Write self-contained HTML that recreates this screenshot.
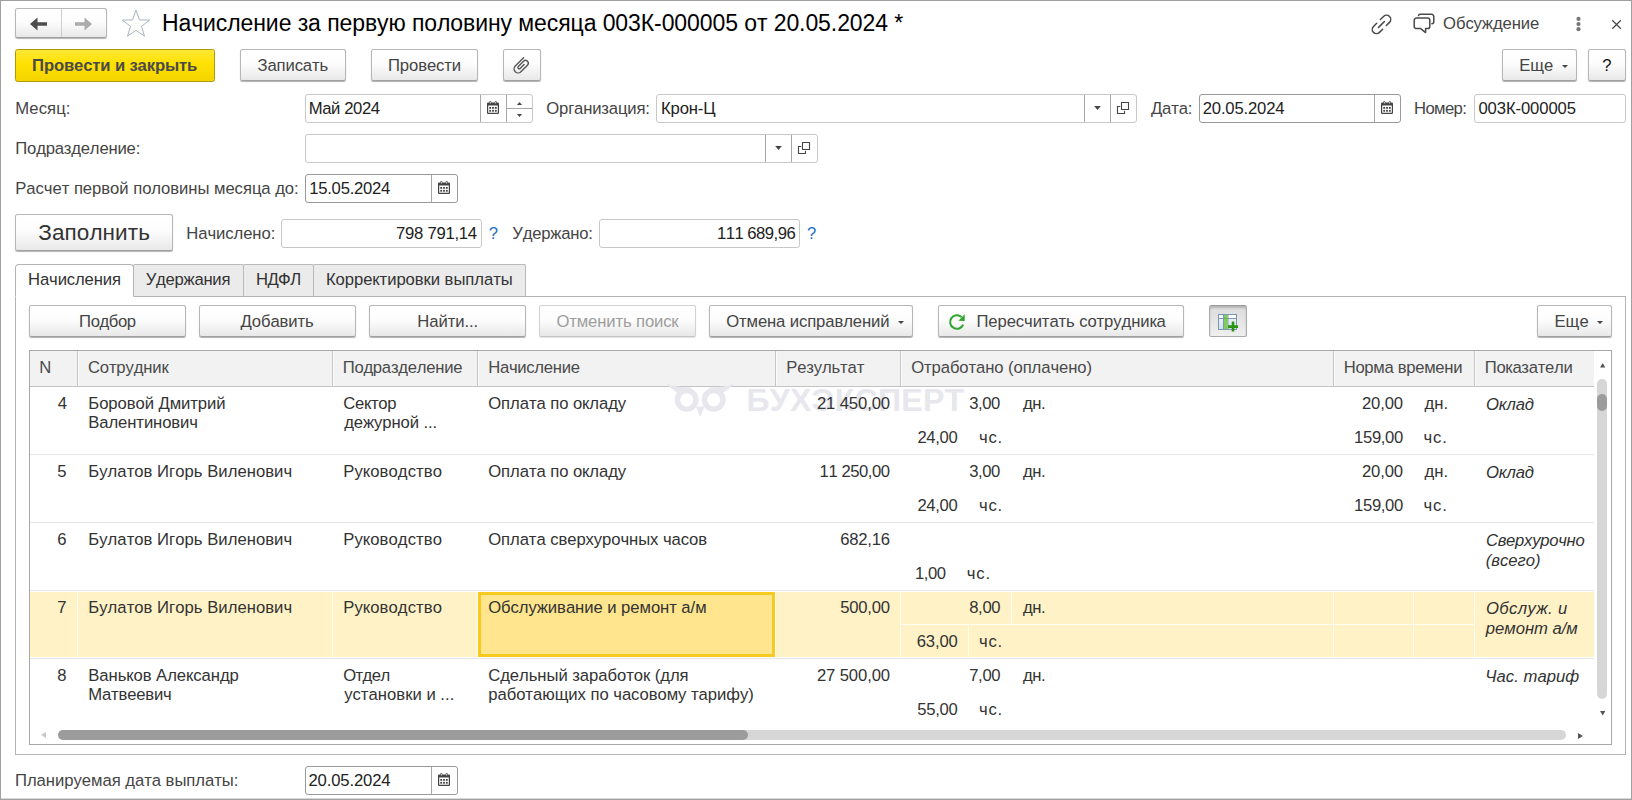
<!DOCTYPE html>
<html lang="ru">
<head>
<meta charset="utf-8">
<title>Начисление за первую половину месяца</title>
<style>
*{box-sizing:border-box;margin:0;padding:0}
html,body{width:1632px;height:800px;overflow:hidden;background:#fff}
body{position:relative;font-family:"Liberation Sans",Arial,sans-serif;font-size:16.67px;color:#333;font-kerning:none}
.frame{position:absolute;left:0;top:0;width:1632px;height:800px;border:1px solid #a0a0a0;box-shadow:inset 0 -1px 0 rgba(150,150,150,.35);z-index:50}
.a{position:absolute}
.t{position:absolute;white-space:nowrap;line-height:20px}
.btn{position:absolute;height:32px;top:49px;border:1px solid #b7b7b7;border-bottom-color:#a0a0a0;border-radius:2.5px;background:linear-gradient(#fff 0%,#fdfdfd 45%,#e8e8e8 100%);box-shadow:0 1px 1px rgba(0,0,0,.3)}
.btn.y{height:33px;background:linear-gradient(#ffe736 0%,#ffe100 45%,#f4d400 100%);border-color:#ad9a08;box-shadow:none}
.btn.dis{border-color:#d2d2d2;border-bottom-color:#c4c4c4;box-shadow:0 1px 1px rgba(0,0,0,.12)}
.btn.tb{top:305px}
.btn.on{background:linear-gradient(#dcdcdc,#efefef);border-color:#aaa;border-top-color:#9a9a9a;box-shadow:inset 0 2px 2px rgba(0,0,0,.18)}
.fld{position:absolute;height:29px;border:1px solid #c8c8c8;border-radius:3px;background:#fff}
.fld.dk{border-color:#9a9a9a}
.dv{position:absolute;top:0;bottom:0;width:1px;background:#a6a6a6}
.tab{position:absolute;top:264px;height:33px;border:1px solid #b9b9b9;border-bottom-color:#b4b4b4;background:#ebebeb;border-radius:2px 2px 0 0}
.tab.act{background:#fff;border-radius:4px 4px 0 0;border-color:#b4b4b4 #b4b4b4 #fff #b4b4b4}
svg{position:absolute;overflow:visible}
.hdv{position:absolute;top:0;width:2px;height:35px;border-left:1px solid #c6c6c6;background:#fafafa}
</style>
</head>
<body>
<div class="frame"></div>
<div class="btn" style="left:15px;top:8px;width:92px;height:30px"></div>
<div class="a" style="left:61px;top:9px;width:1px;height:28px;background:#cdcdcd"></div>
<svg style="left:30px;top:16.6px" width="18" height="14" viewBox="0 0 18 14"><path d="M0 7 L7.5 0.4 V5.3 H17 V8.7 H7.5 V13.6 Z" fill="#4d4d4d"/></svg>
<svg style="left:74px;top:16.6px" width="18" height="14" viewBox="0 0 18 14"><path d="M18 7 L10.5 0.4 V5.3 H1 V8.7 H10.5 V13.6 Z" fill="#ababab"/></svg>
<svg style="left:120.5px;top:9px" width="30" height="28" viewBox="0 0 30 28"><path d="M15 1.2 L18.4 10.9 L28.7 11.1 L20.5 17.3 L23.5 27.2 L15 21.3 L6.5 27.2 L9.5 17.3 L1.3 11.1 L11.6 10.9 Z" fill="#fff" stroke="#aab4be" stroke-width="1"/></svg>
<svg style="left:0;top:0" width="1632" height="60"><g transform="translate(1381.5 24.4) rotate(-45)" fill="none" stroke="#4a4a4a" stroke-width="1.5" stroke-linecap="round"><path d="M2.6 -4.2 H7.1 A4.2 4.2 0 0 1 7.1 4.2 H2.6"/><path d="M-2.6 -4.2 H-7.1 A4.2 4.2 0 0 0 -7.1 4.2 H-2.6"/><path d="M-4.2 0 H4.2"/></g><g fill="none" stroke="#4a4a4a" stroke-width="1.5" stroke-linecap="round" stroke-linejoin="round"><path d="M1416.4 18.1 H1427.6 A2.2 2.2 0 0 1 1429.8 20.3 V26.4 A2.2 2.2 0 0 1 1427.6 28.6 H1425.6 V32.6 L1420.7 28.6 H1416.4 A2.2 2.2 0 0 1 1414.2 26.4 V20.3 A2.2 2.2 0 0 1 1416.4 18.1 Z"/><path d="M1418.5 15.6 A1.6 1.6 0 0 1 1420 14.3 H1431.6 A2.2 2.2 0 0 1 1433.8 16.5 V21.8 A2 2 0 0 1 1431.9 23.8"/></g><g fill="#787878"><circle cx="1578.5" cy="18.9" r="2.1"/><circle cx="1578.5" cy="24.1" r="2.1"/><circle cx="1578.5" cy="29.2" r="2.1"/></g><path d="M1612.3 20.3 L1620.8 28.7 M1620.8 20.3 L1612.3 28.7" stroke="#444" stroke-width="1.2" fill="none"/></svg>
<div class="btn y" style="left:15px;width:200px"><div class="t" style="left:16.10px;top:6px;font-weight:bold;letter-spacing:-0.147px;color:#4a4a4a">Провести и закрыть</div></div>
<div class="btn" style="left:240px;width:106px"><div class="t" style="left:16.50px;top:6px;letter-spacing:-0.129px;color:#444">Записать</div></div>
<div class="btn" style="left:371px;width:107px"><div class="t" style="left:16px;top:6px;letter-spacing:-0.114px;color:#444">Провести</div></div>
<div class="btn" style="left:503px;width:38px"></div>
<svg style="left:0;top:0" width="600" height="90"><g transform="translate(518.1 68.9) rotate(-45)" fill="none" stroke="#555" stroke-width="1.4" stroke-linecap="round"><path d="M11.8 -4 H0 A4 4 0 0 0 0 4 H9.2 A2.75 2.75 0 0 0 9.2 -1.5 H1.8 A1.3 1.3 0 0 0 1.8 1.1 H7.4"/></g></svg>
<div class="btn" style="left:1502px;width:75px"><div class="t" style="left:16.20px;top:6px;color:#444">Еще</div></div>
<svg style="left:1562px;top:65px" width="6" height="3" viewBox="0 0 6 3"><path d="M0 0 H6 L3 3 Z" fill="#444"/></svg>
<div class="btn" style="left:1588px;width:38px"><div class="t" style="left:13.35px;top:6px;color:#111">?</div></div>
<div class="fld" style="left:305px;top:94px;width:228px"><span class="dv" style="left:174px"></span><span class="dv" style="left:200px"></span><div class="t" style="left:2.70px;top:4.0px;letter-spacing:-0.4px;color:#222">Май 2024</div></div>
<div class="a" style="left:507px;top:108px;width:25px;height:1px;background:#a6a6a6"></div>
<svg style="left:487px;top:101px" width="12" height="13" viewBox="0 0 12 13"><path fill="#444" fill-rule="evenodd" d="M1.2 1.5 H2.3 V0.9 A1 1 0 0 1 4.3 0.9 V1.5 H7.7 V0.9 A1 1 0 0 1 9.7 0.9 V1.5 H10.8 A1.2 1.2 0 0 1 12 2.7 V11.8 A1.2 1.2 0 0 1 10.8 13 H1.2 A1.2 1.2 0 0 1 0 11.8 V2.7 A1.2 1.2 0 0 1 1.2 1.5 Z M1.2 4.6 V11.8 H10.8 V4.6 Z M2.9 0.9 V2.6 H3.7 V0.9 A.4 .4 0 0 0 2.9 .9 Z M8.3 0.9 V2.6 H9.1 V0.9 A.4 .4 0 0 0 8.3 .9 Z"/><g fill="#444"><rect x="2.3" y="6" width="1.8" height="1.8"/><rect x="5.1" y="6" width="1.8" height="1.8"/><rect x="7.9" y="6" width="1.8" height="1.8"/><rect x="2.3" y="8.9" width="1.8" height="1.8"/><rect x="5.1" y="8.9" width="1.8" height="1.8"/><rect x="7.9" y="8.9" width="1.8" height="1.8"/></g></svg>
<svg style="left:516.5px;top:101.5px" width="5" height="3" viewBox="0 0 5 3"><path d="M0 3 H5 L2.5 0 Z" fill="#444"/></svg>
<svg style="left:516.5px;top:113.5px" width="5" height="3" viewBox="0 0 5 3"><path d="M0 0 H5 L2.5 3 Z" fill="#444"/></svg>
<div class="fld" style="left:656px;top:94px;width:481px"><span class="dv" style="left:427px"></span><span class="dv" style="left:453px"></span><div class="t" style="left:4px;top:4.0px;letter-spacing:-0.14px;color:#222">Крон-Ц</div></div>
<svg style="left:1094px;top:106px" width="7" height="4" viewBox="0 0 7 4"><path d="M0.2 0 H6.8 L3.5 4 Z" fill="#444"/></svg>
<svg style="left:1117px;top:102px" width="12" height="12" viewBox="0 0 12 12"><path d="M4.5 0.5 H11.5 V7.5 H4.5 Z M3.3 4.5 H0.5 V11.5 H7.5 V8.7" fill="none" stroke="#444" stroke-width="1.1"/></svg>
<div class="fld dk" style="left:1199px;top:94px;width:202px"><span class="dv" style="left:174px"></span><div class="t" style="left:2.70px;top:4.0px;letter-spacing:-0.167px;color:#222">20.05.2024</div></div>
<svg style="left:1381px;top:101px" width="12" height="13" viewBox="0 0 12 13"><path fill="#444" fill-rule="evenodd" d="M1.2 1.5 H2.3 V0.9 A1 1 0 0 1 4.3 0.9 V1.5 H7.7 V0.9 A1 1 0 0 1 9.7 0.9 V1.5 H10.8 A1.2 1.2 0 0 1 12 2.7 V11.8 A1.2 1.2 0 0 1 10.8 13 H1.2 A1.2 1.2 0 0 1 0 11.8 V2.7 A1.2 1.2 0 0 1 1.2 1.5 Z M1.2 4.6 V11.8 H10.8 V4.6 Z M2.9 0.9 V2.6 H3.7 V0.9 A.4 .4 0 0 0 2.9 .9 Z M8.3 0.9 V2.6 H9.1 V0.9 A.4 .4 0 0 0 8.3 .9 Z"/><g fill="#444"><rect x="2.3" y="6" width="1.8" height="1.8"/><rect x="5.1" y="6" width="1.8" height="1.8"/><rect x="7.9" y="6" width="1.8" height="1.8"/><rect x="2.3" y="8.9" width="1.8" height="1.8"/><rect x="5.1" y="8.9" width="1.8" height="1.8"/><rect x="7.9" y="8.9" width="1.8" height="1.8"/></g></svg>
<div class="fld" style="left:1474px;top:94px;width:152px"><div class="t" style="left:3.40px;top:4.0px;letter-spacing:-0.1px;color:#222">003К-000005</div></div>
<div class="fld" style="left:305px;top:134px;width:513px"><span class="dv" style="left:459px"></span><span class="dv" style="left:485px"></span></div>
<svg style="left:775px;top:146px" width="7" height="4" viewBox="0 0 7 4"><path d="M0.2 0 H6.8 L3.5 4 Z" fill="#444"/></svg>
<svg style="left:798px;top:142px" width="12" height="12" viewBox="0 0 12 12"><path d="M4.5 0.5 H11.5 V7.5 H4.5 Z M3.3 4.5 H0.5 V11.5 H7.5 V8.7" fill="none" stroke="#444" stroke-width="1.1"/></svg>
<div class="fld dk" style="left:305px;top:174px;width:153px"><span class="dv" style="left:125px"></span><div class="t" style="left:3.20px;top:4.0px;letter-spacing:-0.244px;color:#222">15.05.2024</div></div>
<svg style="left:438px;top:181px" width="12" height="13" viewBox="0 0 12 13"><path fill="#444" fill-rule="evenodd" d="M1.2 1.5 H2.3 V0.9 A1 1 0 0 1 4.3 0.9 V1.5 H7.7 V0.9 A1 1 0 0 1 9.7 0.9 V1.5 H10.8 A1.2 1.2 0 0 1 12 2.7 V11.8 A1.2 1.2 0 0 1 10.8 13 H1.2 A1.2 1.2 0 0 1 0 11.8 V2.7 A1.2 1.2 0 0 1 1.2 1.5 Z M1.2 4.6 V11.8 H10.8 V4.6 Z M2.9 0.9 V2.6 H3.7 V0.9 A.4 .4 0 0 0 2.9 .9 Z M8.3 0.9 V2.6 H9.1 V0.9 A.4 .4 0 0 0 8.3 .9 Z"/><g fill="#444"><rect x="2.3" y="6" width="1.8" height="1.8"/><rect x="5.1" y="6" width="1.8" height="1.8"/><rect x="7.9" y="6" width="1.8" height="1.8"/><rect x="2.3" y="8.9" width="1.8" height="1.8"/><rect x="5.1" y="8.9" width="1.8" height="1.8"/><rect x="7.9" y="8.9" width="1.8" height="1.8"/></g></svg>
<div class="btn" style="left:15px;top:214px;width:158px;height:37px"><div class="t" style="left:22.30px;top:4.0px;font-size:22.5px;line-height:28px;letter-spacing:0.075px;color:#333">Заполнить</div></div>
<div class="fld" style="left:281px;top:219px;width:201px"><div class="t" style="left:114px;top:4.0px;letter-spacing:-0.256px;color:#222">798 791,14</div></div>
<div class="fld" style="left:599px;top:219px;width:201px"><div class="t" style="left:116.90px;top:4.0px;letter-spacing:-0.511px;color:#222">111 689,96</div></div>
<div class="a" style="left:15px;top:296px;width:1611px;height:459px;border:1px solid #b4b4b4;background:#fff"></div>
<div class="tab" style="left:133px;width:111px"><div class="t" style="left:11.70px;top:5px;letter-spacing:-0.25px;color:#333">Удержания</div></div>
<div class="tab" style="left:243px;width:71px"><div class="t" style="left:12px;top:5px;letter-spacing:-0.6px;color:#333">НДФЛ</div></div>
<div class="tab" style="left:313px;width:213px"><div class="t" style="left:11.90px;top:5px;letter-spacing:-0.06px;color:#333">Корректировки выплаты</div></div>
<div class="tab act" style="left:15px;width:119px"><div class="t" style="left:12.10px;top:5px;letter-spacing:-0.133px;color:#333">Начисления</div></div>
<div class="btn tb" style="left:29px;width:157px"><div class="t" style="left:49.10px;top:6px;letter-spacing:-0.4px;color:#444">Подбор</div></div>
<div class="btn tb" style="left:199px;width:157px"><div class="t" style="left:40.60px;top:6px;letter-spacing:-0.086px;color:#444">Добавить</div></div>
<div class="btn tb" style="left:369px;width:157px"><div class="t" style="left:47.30px;top:6px;letter-spacing:-0.071px;color:#444">Найти...</div></div>
<div class="btn tb dis" style="left:539px;width:157px"><div class="t" style="left:16.50px;top:6px;letter-spacing:-0.138px;color:#9d9d9d">Отменить поиск</div></div>
<div class="btn tb" style="left:709px;width:204px"><div class="t" style="left:16.20px;top:6px;letter-spacing:-0.112px;color:#444">Отмена исправлений</div></div>
<div class="btn tb" style="left:938px;width:246px"><div class="t" style="left:37.50px;top:6px;letter-spacing:-0.1px;color:#444">Пересчитать сотрудника</div></div>
<div class="btn tb on" style="left:1209px;width:38px"></div>
<div class="btn tb" style="left:1537px;width:75px"><div class="t" style="left:16.40px;top:6px;letter-spacing:0.1px;color:#444">Еще</div></div>
<svg style="left:898px;top:321px" width="6" height="3" viewBox="0 0 6 3"><path d="M0 0 H6 L3 3 Z" fill="#444"/></svg>
<svg style="left:1597px;top:321px" width="6" height="3" viewBox="0 0 6 3"><path d="M0 0 H6 L3 3 Z" fill="#444"/></svg>
<svg style="left:0;top:300px" width="1000" height="40"><g transform="translate(956.9 22)"><path d="M6.3 2.6 A6.8 6.8 0 1 1 4.6 -5" fill="none" stroke="#2fa52f" stroke-width="2"/><path d="M7.8 -7.8 V-1 L1.5 -1.3 Z" fill="#2fa52f"/></g></svg>
<svg style="left:1218px;top:314px" width="20" height="20" viewBox="0 0 20 20"><defs><linearGradient id="cg" x1="0" y1="0" x2="0" y2="1"><stop offset="0" stop-color="#f4f8fb"/><stop offset="1" stop-color="#cfe0ee"/></linearGradient></defs><rect x="0.5" y="0.5" width="18" height="15" fill="url(#cg)" stroke="#7b98b0"/><rect x="1" y="1" width="17" height="3" fill="#fff"/><path d="M.5 4.5 H18.5 M5.5 .5 V15.5 M10 .5 V15.5" stroke="#7b98b0" fill="none"/><rect x="6" y="1" width="3.6" height="14" fill="#7fcb5c"/><path d="M6 4.5 H9.6" stroke="#6ab04a"/><path d="M15 7.6 V17.6 M10 12.6 H20" stroke="#2a9410" stroke-width="2.6"/></svg>
<div class="a" style="left:29px;top:350px;width:1583px;height:395px;border:1px solid #a8a8a8;background:#fff;overflow:hidden">
<div class="a" style="left:0;top:0;width:1564px;height:35px;background:#f2f2f2"></div>
<div class="a" style="left:0;top:35px;width:1564px;height:1px;background:#c4c4c4"></div>
<div class="hdv" style="left:47px"></div>
<div class="hdv" style="left:302px"></div>
<div class="hdv" style="left:447px"></div>
<div class="hdv" style="left:745px"></div>
<div class="hdv" style="left:870px"></div>
<div class="hdv" style="left:1303px"></div>
<div class="hdv" style="left:1444px"></div>
<div class="a" style="left:0;top:103px;width:1564px;height:1px;background:#e6e6e6"></div>
<div class="a" style="left:0;top:171px;width:1564px;height:1px;background:#e6e6e6"></div>
<div class="a" style="left:0;top:239px;width:1564px;height:1px;background:#e6e6e6"></div>
<div class="a" style="left:0;top:307px;width:1564px;height:1px;background:#e6e6e6"></div>
<div class="a" style="left:0;top:241px;width:1564px;height:65px;background:#fff2c6"></div>
<div class="a" style="left:47px;top:241px;width:1px;height:65px;background:#fffcf3"></div>
<div class="a" style="left:302px;top:241px;width:1px;height:65px;background:#fffcf3"></div>
<div class="a" style="left:447px;top:241px;width:1px;height:65px;background:#fffcf3"></div>
<div class="a" style="left:745px;top:241px;width:1px;height:65px;background:#fffcf3"></div>
<div class="a" style="left:870px;top:241px;width:1px;height:65px;background:#fffcf3"></div>
<div class="a" style="left:1303px;top:241px;width:1px;height:65px;background:#fffcf3"></div>
<div class="a" style="left:1383px;top:241px;width:1px;height:65px;background:#fffcf3"></div>
<div class="a" style="left:1444px;top:241px;width:1px;height:65px;background:#fffcf3"></div>
<div class="a" style="left:981px;top:241px;width:1px;height:32px;background:#fffcf3"></div>
<div class="a" style="left:938px;top:273px;width:1px;height:33px;background:#fffcf3"></div>
<div class="a" style="left:871px;top:273px;width:573px;height:1px;background:#fffcf3"></div>
<div class="a" style="left:448px;top:241px;width:297px;height:65px;background:#fee58e;border:3px solid #f8c91f"></div>
<svg style="left:0;top:0" width="1564" height="80"><g transform="translate(-30 -351)" fill="none" stroke="#e7e7ed"><circle cx="686.7" cy="399.8" r="9.3" stroke-width="5.4"/><circle cx="713.7" cy="399.8" r="9.3" stroke-width="5.4"/><path d="M666.2 383.2 Q676 387.6 691 387.6 L693 391.5 Q680 394.5 675.5 391.6 Q670 388 666.2 383.2 Z" fill="#e7e7ed" stroke="none"/><path d="M734.2 383.2 Q724.4 387.6 709.4 387.6 L707.4 391.5 Q720.4 394.5 724.9 391.6 Q730.4 388 734.2 383.2 Z" fill="#e7e7ed" stroke="none"/><path d="M696.6 407 L700.2 416 L703.8 407 Z" fill="#e7e7ed" stroke-width="1"/></g></svg>
<div class="t" style="left:716.40px;top:31px;font-size:32px;line-height:36px;font-weight:bold;letter-spacing:0.311px;color:#e7e7ed">БУХЭКСПЕРТ</div>
<div class="t" style="left:9.15px;top:7px;color:#4a4a4a">N</div>
<div class="t" style="left:57.90px;top:7px;letter-spacing:-0.15px;color:#4a4a4a">Сотрудник</div>
<div class="t" style="left:312.70px;top:7px;letter-spacing:-0.258px;color:#4a4a4a">Подразделение</div>
<div class="t" style="left:458.20px;top:7px;letter-spacing:-0.289px;color:#4a4a4a">Начисление</div>
<div class="t" style="left:756.20px;top:7px;letter-spacing:-0.137px;color:#4a4a4a">Результат</div>
<div class="t" style="left:881.20px;top:7px;letter-spacing:-0.095px;color:#4a4a4a">Отработано (оплачено)</div>
<div class="t" style="left:1313.70px;top:7px;letter-spacing:-0.308px;color:#4a4a4a">Норма времени</div>
<div class="t" style="left:1454.70px;top:7px;letter-spacing:-0.278px;color:#4a4a4a">Показатели</div>
<div class="t" style="left:27.85px;top:43px;color:#333">4</div>
<div class="t" style="left:58.30px;top:43px;letter-spacing:-0.079px;color:#333">Боровой Дмитрий</div>
<div class="t" style="left:58.30px;top:62px;letter-spacing:-0.1px;color:#333">Валентинович</div>
<div class="t" style="left:313.20px;top:43px;letter-spacing:-0.28px;color:#333">Сектор</div>
<div class="t" style="left:314.20px;top:62px;letter-spacing:-0.091px;color:#333">дежурной ...</div>
<div class="t" style="left:458.20px;top:43px;letter-spacing:-0.067px;color:#333">Оплата по окладу</div>
<div class="t" style="left:786.90px;top:43px;letter-spacing:-0.113px;color:#333">21 450,00</div>
<div class="t" style="left:939.20px;top:43px;letter-spacing:-0.433px;color:#333">3,00</div>
<div class="t" style="left:992.90px;top:43px;letter-spacing:-0.4px;color:#333">дн.</div>
<div class="t" style="left:887.40px;top:77px;letter-spacing:-0.35px;color:#333">24,00</div>
<div class="t" style="left:949px;top:77px;letter-spacing:0.8px;color:#333">чс.</div>
<div class="t" style="left:1332px;top:43px;letter-spacing:-0.175px;color:#333">20,00</div>
<div class="t" style="left:1394.60px;top:43px;letter-spacing:-0.05px;color:#333">дн.</div>
<div class="t" style="left:1324.10px;top:77px;letter-spacing:-0.36px;color:#333">159,00</div>
<div class="t" style="left:1393.60px;top:77px;letter-spacing:0.8px;color:#333">чс.</div>
<div class="t" style="left:1455.90px;top:44px;font-style:italic;letter-spacing:-0.125px;color:#333">Оклад</div>
<div class="t" style="left:27.35px;top:111px;color:#333">5</div>
<div class="t" style="left:58.30px;top:111px;letter-spacing:0.027px;color:#333">Булатов Игорь Виленович</div>
<div class="t" style="left:313.20px;top:111px;letter-spacing:0.09px;color:#333">Руководство</div>
<div class="t" style="left:458.20px;top:111px;letter-spacing:-0.067px;color:#333">Оплата по окладу</div>
<div class="t" style="left:789.60px;top:111px;letter-spacing:-0.45px;color:#333">11 250,00</div>
<div class="t" style="left:939.20px;top:111px;letter-spacing:-0.433px;color:#333">3,00</div>
<div class="t" style="left:992.90px;top:111px;letter-spacing:-0.4px;color:#333">дн.</div>
<div class="t" style="left:887.40px;top:145px;letter-spacing:-0.35px;color:#333">24,00</div>
<div class="t" style="left:949px;top:145px;letter-spacing:0.8px;color:#333">чс.</div>
<div class="t" style="left:1332px;top:111px;letter-spacing:-0.175px;color:#333">20,00</div>
<div class="t" style="left:1394.60px;top:111px;letter-spacing:-0.05px;color:#333">дн.</div>
<div class="t" style="left:1324.10px;top:145px;letter-spacing:-0.36px;color:#333">159,00</div>
<div class="t" style="left:1393.60px;top:145px;letter-spacing:0.8px;color:#333">чс.</div>
<div class="t" style="left:1455.90px;top:112px;font-style:italic;letter-spacing:-0.125px;color:#333">Оклад</div>
<div class="t" style="left:27.35px;top:179px;color:#333">6</div>
<div class="t" style="left:58.30px;top:179px;letter-spacing:0.027px;color:#333">Булатов Игорь Виленович</div>
<div class="t" style="left:313.20px;top:179px;letter-spacing:0.09px;color:#333">Руководство</div>
<div class="t" style="left:458.20px;top:179px;letter-spacing:-0.071px;color:#333">Оплата сверхурочных часов</div>
<div class="t" style="left:810.20px;top:179px;letter-spacing:-0.24px;color:#333">682,16</div>
<div class="t" style="left:885.10px;top:213px;letter-spacing:-0.5px;color:#333">1,00</div>
<div class="t" style="left:936.70px;top:213px;letter-spacing:0.9px;color:#333">чс.</div>
<div class="t" style="left:1455.90px;top:180px;font-style:italic;letter-spacing:-0.26px;color:#333">Сверхурочно</div>
<div class="t" style="left:1455.70px;top:200px;font-style:italic;color:#333">(всего)</div>
<div class="t" style="left:27.35px;top:247px;color:#333">7</div>
<div class="t" style="left:58.30px;top:247px;letter-spacing:0.027px;color:#333">Булатов Игорь Виленович</div>
<div class="t" style="left:313.20px;top:247px;letter-spacing:0.09px;color:#333">Руководство</div>
<div class="t" style="left:458.20px;top:247px;letter-spacing:-0.058px;color:#333">Обслуживание и ремонт а/м</div>
<div class="t" style="left:810.30px;top:247px;letter-spacing:-0.26px;color:#333">500,00</div>
<div class="t" style="left:939.20px;top:247px;letter-spacing:-0.333px;color:#333">8,00</div>
<div class="t" style="left:992.90px;top:247px;letter-spacing:-0.4px;color:#333">дн.</div>
<div class="t" style="left:886.70px;top:281px;letter-spacing:-0.125px;color:#333">63,00</div>
<div class="t" style="left:949px;top:281px;letter-spacing:0.8px;color:#333">чс.</div>
<div class="t" style="left:1455.90px;top:248px;font-style:italic;letter-spacing:0.375px;color:#333">Обслуж. и</div>
<div class="t" style="left:1455.80px;top:268px;font-style:italic;letter-spacing:-0.022px;color:#333">ремонт а/м</div>
<div class="t" style="left:27.35px;top:315px;color:#333">8</div>
<div class="t" style="left:58.30px;top:315px;letter-spacing:-0.056px;color:#333">Ваньков Александр</div>
<div class="t" style="left:58.30px;top:334px;letter-spacing:-0.188px;color:#333">Матвеевич</div>
<div class="t" style="left:313.20px;top:315px;letter-spacing:-0.575px;color:#333">Отдел</div>
<div class="t" style="left:314.20px;top:334px;letter-spacing:0.014px;color:#333">установки и ...</div>
<div class="t" style="left:458.20px;top:315px;letter-spacing:-0.05px;color:#333">Сдельный заработок (для</div>
<div class="t" style="left:458.20px;top:334px;letter-spacing:-0.038px;color:#333">работающих по часовому тарифу)</div>
<div class="t" style="left:786.90px;top:315px;letter-spacing:-0.113px;color:#333">27 500,00</div>
<div class="t" style="left:939.20px;top:315px;letter-spacing:-0.333px;color:#333">7,00</div>
<div class="t" style="left:992.90px;top:315px;letter-spacing:-0.4px;color:#333">дн.</div>
<div class="t" style="left:887.20px;top:349px;letter-spacing:-0.25px;color:#333">55,00</div>
<div class="t" style="left:949px;top:349px;letter-spacing:0.8px;color:#333">чс.</div>
<div class="t" style="left:1455.20px;top:316px;font-style:italic;letter-spacing:0.044px;color:#333">Час. тариф</div>
<div class="a" style="left:0;top:376px;width:1581px;height:17px;background:#fff"></div>
<div class="a" style="left:28px;top:379px;width:1508px;height:10px;border-radius:5px;background:#d6d6d6"></div>
<div class="a" style="left:28px;top:379px;width:690px;height:10px;border-radius:5px;background:#9c9c9c"></div>
<svg style="left:11px;top:381.20000000000005px" width="5" height="6" viewBox="0 0 5 6"><path d="M5 0 L0 3 L5 6Z" fill="#c8c8c8"/></svg>
<svg style="left:1548px;top:381.5px" width="5" height="6" viewBox="0 0 5 6"><path d="M0 0 L5 3 L0 6Z" fill="#555"/></svg>
<div class="a" style="left:1564px;top:0;width:17px;height:376px;background:#fff"></div>
<div class="a" style="left:1567px;top:28px;width:10px;height:320px;border-radius:5px;background:#d6d6d6"></div>
<div class="a" style="left:1567px;top:43px;width:10px;height:17px;border-radius:5px;background:#9c9c9c"></div>
<svg style="left:1569.5px;top:12px" width="5.4" height="4.4" viewBox="0 0 6 5"><path d="M0 5 L3 0 L6 5Z" fill="#555"/></svg>
<svg style="left:1569.5px;top:360px" width="5.4" height="4.4" viewBox="0 0 6 5"><path d="M0 0 L3 5 L6 0Z" fill="#555"/></svg>
</div>
<div class="fld dk" style="left:305px;top:766px;width:153px"><span class="dv" style="left:125px"></span><div class="t" style="left:2.50px;top:4.0px;letter-spacing:-0.144px;color:#222">20.05.2024</div></div>
<svg style="left:438px;top:773px" width="12" height="13" viewBox="0 0 12 13"><path fill="#444" fill-rule="evenodd" d="M1.2 1.5 H2.3 V0.9 A1 1 0 0 1 4.3 0.9 V1.5 H7.7 V0.9 A1 1 0 0 1 9.7 0.9 V1.5 H10.8 A1.2 1.2 0 0 1 12 2.7 V11.8 A1.2 1.2 0 0 1 10.8 13 H1.2 A1.2 1.2 0 0 1 0 11.8 V2.7 A1.2 1.2 0 0 1 1.2 1.5 Z M1.2 4.6 V11.8 H10.8 V4.6 Z M2.9 0.9 V2.6 H3.7 V0.9 A.4 .4 0 0 0 2.9 .9 Z M8.3 0.9 V2.6 H9.1 V0.9 A.4 .4 0 0 0 8.3 .9 Z"/><g fill="#444"><rect x="2.3" y="6" width="1.8" height="1.8"/><rect x="5.1" y="6" width="1.8" height="1.8"/><rect x="7.9" y="6" width="1.8" height="1.8"/><rect x="2.3" y="8.9" width="1.8" height="1.8"/><rect x="5.1" y="8.9" width="1.8" height="1.8"/><rect x="7.9" y="8.9" width="1.8" height="1.8"/></g></svg>
<div class="t" style="left:161.90px;top:9px;font-size:23px;line-height:28px;letter-spacing:-0.083px;color:#000">Начисление за первую половину месяца 003К-000005 от 20.05.2024 *</div>
<div class="t" style="left:1443.10px;top:14px;letter-spacing:-0.1px;color:#454545">Обсуждение</div>
<div class="t" style="left:15.30px;top:99px;letter-spacing:0.1px;color:#454545">Месяц:</div>
<div class="t" style="left:546.30px;top:99px;letter-spacing:-0.164px;color:#454545">Организация:</div>
<div class="t" style="left:1150.90px;top:99px;letter-spacing:-0.125px;color:#454545">Дата:</div>
<div class="t" style="left:1414px;top:99px;letter-spacing:-0.6px;color:#454545">Номер:</div>
<div class="t" style="left:15.30px;top:139px;letter-spacing:-0.192px;color:#454545">Подразделение:</div>
<div class="t" style="left:15.30px;top:179px;letter-spacing:-0.044px;color:#454545">Расчет первой половины месяца до:</div>
<div class="t" style="left:186.30px;top:224px;letter-spacing:-0.078px;color:#454545">Начислено:</div>
<div class="t" style="left:488.75px;top:224px;color:#1a6fc4">?</div>
<div class="t" style="left:512.30px;top:224px;letter-spacing:-0.213px;color:#454545">Удержано:</div>
<div class="t" style="left:807.05px;top:224px;color:#1a6fc4">?</div>
<div class="t" style="left:15px;top:771px;letter-spacing:-0.033px;color:#454545">Планируемая дата выплаты:</div>
</body>
</html>
